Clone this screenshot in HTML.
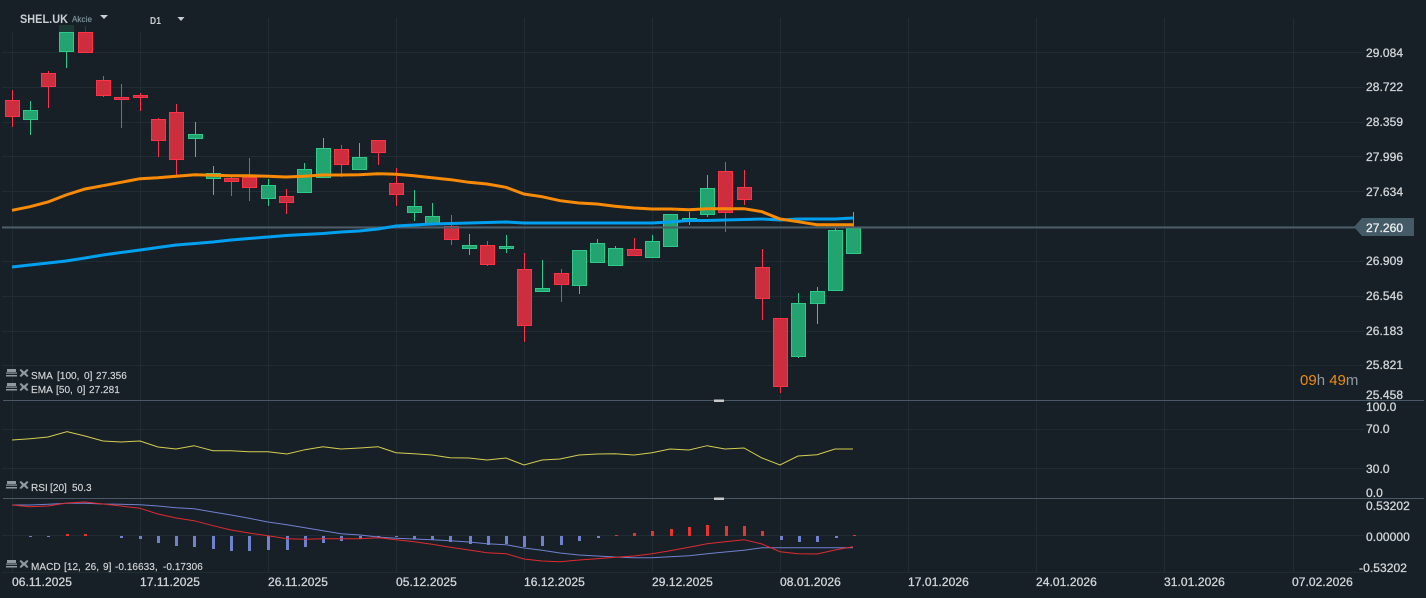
<!DOCTYPE html>
<html><head><meta charset="utf-8"><title>SHEL.UK</title>
<style>
html,body{margin:0;padding:0;background:#172027;width:1426px;height:598px;overflow:hidden}
svg{display:block;position:absolute;left:0;top:0}
text{font-family:"Liberation Sans",sans-serif;font-size:12px;fill:#d3d6d8;stroke:#d3d6d8;stroke-width:.3px;letter-spacing:.08px;white-space:pre}
.l{font-size:10px;fill:#d3d6d8;stroke:#d3d6d8;stroke-width:.15px;letter-spacing:.05px}
.g{fill:none;stroke:#1f2c34;stroke-width:1}
.r rect{fill:#cd2e3e;stroke:#ff3348;stroke-width:1}
.r path{fill:none;stroke:#ff3348;stroke-width:1}
.v rect{fill:#23a36f;stroke:#2ccb89;stroke-width:1}
.v path{fill:none;stroke:#2ccb89;stroke-width:1}
</style></head><body>
<svg width="1426" height="598" viewBox="0 0 1426 598">
<path class="g" d="M2 52.5H1364M2 87.5H1364M2 122.5H1364M2 156.5H1364M2 191.5H1364M2 226.5H1364M2 261.5H1364M2 296.5H1364M2 331.5H1364M2 365.5H1364M2 429.5H1364M2 468.5H1364M2 535.5H1364M2 572.5H1364"/>
<path class="g" d="M12.5 32V572M140.5 32V572M268.5 18V572M396.5 18V572M524.5 18V572M652.5 18V572M780.5 18V572M908.5 18V572M1036.5 18V572M1164.5 18V572M1293.5 18V572"/>

<rect x="59" y="25" width="15" height="7" fill="#1c3a34"/>
<path d="M85.5 26V32" stroke="#5a2a33"/>
<g class="r">
<path d="M12.5 90V127M48.5 71V108M103.5 76V97M121.5 84V128M140.5 93V111M158.5 118V157M176.5 104V176M231.5 177V196M249.5 158V201M286.5 189V214M341.5 145V177M378.5 153V165M396.5 168V206M451.5 215V245M487.5 241V266M524.5 253V342M561.5 269V302M634.5 238V256M725.5 162V232M744.5 170V205M762.5 249V320M780.5 318V393"/>
<rect x="5.5" y="100.5" width="14" height="16"/>
<rect x="41.500" y="73.500" width="14" height="13"/>
<rect x="78.500" y="32.500" width="14" height="20"/>
<rect x="96.500" y="80.500" width="14" height="15"/>
<rect x="114.500" y="97.500" width="14" height="2"/>
<rect x="133.500" y="95.500" width="14" height="2"/>
<rect x="151.500" y="119.500" width="14" height="21"/>
<rect x="169.500" y="112.500" width="14" height="47"/>
<rect x="224.500" y="178.500" width="14" height="3"/>
<rect x="242.500" y="177.500" width="14" height="10"/>
<rect x="279.500" y="196.500" width="14" height="6"/>
<rect x="334.500" y="149.500" width="14" height="15"/>
<rect x="371.500" y="140.500" width="14" height="12"/>
<rect x="389.500" y="183.500" width="14" height="11"/>
<rect x="444.500" y="226.500" width="14" height="13"/>
<rect x="480.500" y="245.500" width="14" height="19"/>
<rect x="517.500" y="269.500" width="14" height="56"/>
<rect x="554.500" y="273.500" width="14" height="11"/>
<rect x="627.500" y="249.500" width="14" height="6"/>
<rect x="718.500" y="171.500" width="14" height="41"/>
<rect x="737.500" y="187.500" width="14" height="12"/>
<rect x="755.500" y="267.500" width="14" height="31"/>
<rect x="773.500" y="318.500" width="14" height="68"/>
</g>
<g class="v">
<path d="M30.5 101V135M66.5 52V68M195.5 122V157M213.5 166V195M268.5 179V206M304.5 163V193M323.5 138V178M359.5 143V170M414.5 190V221M432.5 203V225M469.5 234V255M506.5 235V253M542.5 260V292M579.5 286V294M597.5 239V263M615.5 246V266M652.5 235V258M689.5 212V225M707.5 175V217M798.5 293V358M817.5 287V324M835.5 228V291M853.5 212V254"/>
<rect x="23.500" y="110.500" width="14" height="9"/>
<rect x="59.500" y="32.500" width="14" height="19"/>
<rect x="188.500" y="134.500" width="14" height="4"/>
<rect x="206.500" y="173.500" width="14" height="5"/>
<rect x="261.500" y="185.500" width="14" height="13"/>
<rect x="297.500" y="169.500" width="14" height="23"/>
<rect x="316.500" y="148.500" width="14" height="29"/>
<rect x="352.500" y="157.500" width="14" height="12"/>
<rect x="407.500" y="206.500" width="14" height="6"/>
<rect x="425.500" y="216.500" width="14" height="8"/>
<rect x="462.500" y="245.500" width="14" height="3"/>
<rect x="499.500" y="246.500" width="14" height="2"/>
<rect x="535.500" y="288.500" width="14" height="3"/>
<rect x="572.500" y="250.500" width="14" height="35"/>
<rect x="590.500" y="243.500" width="14" height="19"/>
<rect x="608.500" y="248.500" width="14" height="17"/>
<rect x="645.500" y="241.500" width="14" height="16"/>
<rect x="663.500" y="214.500" width="14" height="32"/>
<rect x="682.500" y="218.500" width="14" height="3"/>
<rect x="700.500" y="188.500" width="14" height="26"/>
<rect x="791.500" y="303.500" width="14" height="53"/>
<rect x="810.500" y="291.500" width="14" height="12"/>
<rect x="828.500" y="230.500" width="14" height="60"/>
<rect x="846.500" y="228.500" width="14" height="25"/>
</g>

<rect x="2" y="226.500" width="1353" height="2" fill="#4b5d69"/>
<polygon points="1354,227 1362,218 1414,218 1414,236 1362,236" fill="#455a67"/>

<polyline fill="none" stroke="#00a0f0" stroke-width="3" points="12,267 30,265 48,263 66,261 85,258 103,255 121,252.500 140,250 158,247.500 176,245 195,243.500 213,242 231,240 249,238.500 268,237 286,235.500 304,234.500 323,233.500 341,232 359,231 378,229 396,226 414,225 432,224 451,223.500 469,223 487,222.500 506,222 524,223 652,223 670,222 689,220.500 707,220.500 725,220 744,219.500 762,219 780,220 798,219 835,219 853,218"/>
<polyline fill="none" stroke="#f98a05" stroke-width="3" points="12,210.300 30,206.700 48,202 66,195 85,189 103,185.700 121,182.300 140,178.700 158,177.700 176,176.300 195,174.700 213,175.300 231,175.700 249,175.700 268,176.300 286,177 304,176.300 323,175 341,175 359,174.700 378,173.700 396,174.300 414,175.700 432,177.700 451,179.700 469,182.300 487,184 506,187.300 524,194 542,196.700 560,200.700 579,203 597,204 615,206.300 634,208 652,209 670,209 689,209.700 707,208.700 725,208.700 744,208.700 762,211.700 780,219 798,221.700 817,224.700 853,224.700"/>

<rect x="3" y="400" width="1421" height="1" fill="#4a5965"/>
<rect x="3" y="498" width="1421" height="1" fill="#4a5965"/>
<rect x="714" y="399.500" width="10" height="2.500" fill="#c9c9c9"/>
<rect x="714" y="497.500" width="10" height="2.500" fill="#c9c9c9"/>

<polyline fill="none" stroke="#d6cd50" stroke-width="1" points="12,440 30,438.700 48,437 67,431.700 85,436 103,441 121,442 140,441 158,447 176,449 194,445.700 213,450.700 231,450.700 249,451.700 268,451.700 287,454 305,449.700 323,446.700 341,449 360,448 378,446.700 396,452.700 414,453.700 432,455 450,457.700 469,458 487,460 506,458 524,465 542,460 560,459 579,455 597,454 615,453.700 634,455 652,452.700 670,449 689,450 707,445.700 725,449 744,448 762,458 780,465 798,456 817,454.700 835,449 853,449"/>

<path fill="#7081ce" d="M29 536h3v1h-3zM47 536h3v1h-3zM120 536h3v2h-3zM139 536h3v3h-3zM157 536h3v7h-3zM175 536h3v10h-3zM193 536h3v11h-3zM212 536h3v13h-3zM230 536h3v15h-3zM248 536h3v15h-3zM267 536h3v14h-3zM286 536h3v14h-3zM304 536h3v11h-3zM322 536h3v7h-3zM340 536h3v5h-3zM359 536h3v3h-3zM377 536h3v1h-3zM395 536h3v1h-3zM413 536h3v3h-3zM431 536h3v4h-3zM449 536h3v6h-3zM469 536h3v8h-3zM487 536h3v9h-3zM505 536h3v8h-3zM523 536h3v11h-3zM541 536h3v10h-3zM560 536h3v9h-3zM578 536h3v5h-3zM597 536h3v2h-3zM780 536h3v4h-3zM798 536h3v6h-3zM816 536h3v6h-3zM835 536h3v2h-3z"/>
<path fill="#e8332f" d="M66 534h3v2h-3zM84 534h3v2h-3zM615 535h3v1h-3zM633 533h3v3h-3zM651 531h3v5h-3zM670 529h3v7h-3zM688 527h3v9h-3zM706 525h3v11h-3zM725 526h3v10h-3zM743 526h3v10h-3zM761 531h3v5h-3zM853 535h3v1h-3z"/>
<polyline fill="none" stroke="#7081ce" stroke-width="1" points="12,505 30,505 48,504.300 67,503.300 85,503.300 103,504 121,504.300 140,504.700 158,506 176,507.700 194,508.700 213,512 231,515 249,518.300 268,522 287,524.700 305,527.700 323,530.700 341,533.700 360,535 378,537 396,538.300 414,539 432,539.700 450,540.700 469,542 487,543.700 506,544.700 524,548 542,550.300 560,553 579,555 597,556 615,557 634,557.700 652,557.700 670,556.700 689,555.700 707,553.700 725,552 744,550.300 762,547.700 853,547.700"/>
<polyline fill="none" stroke="#e02a2e" stroke-width="1" points="12,505 30,506.700 48,506 67,503 85,502 103,504 121,506 140,508.300 158,514 176,518 194,520.700 213,525.700 231,530 249,533 268,535.700 287,538.700 305,539.300 323,538.700 360,538.700 378,537.700 396,539.700 414,541.700 432,544.300 450,547.300 469,550 487,552.700 506,553.700 524,559 542,561 560,561.700 579,560 597,558.700 615,557.300 634,556 652,553.700 670,550.700 689,547.300 707,543.700 725,541.700 744,539.700 762,544 780,551.700 798,553.700 817,554 835,550 853,546.700"/>

<!-- legend icons -->
<g fill="#8f999e"><rect x="7" y="369" width="9" height="3"/><rect x="6" y="372.500" width="11" height="1.200"/><rect x="6" y="375" width="11" height="1.500"/><path d="M19.500 370l1.500-1 3 2.600 3-2.600 1.500 1-2.500 3 2.500 3-1.500 1-3-2.600-3 2.600-1.500-1 2.500-3z"/></g>
<g fill="#8f999e" transform="translate(0,14)"><rect x="7" y="369" width="9" height="3"/><rect x="6" y="372.500" width="11" height="1.200"/><rect x="6" y="375" width="11" height="1.500"/><path d="M19.500 370l1.500-1 3 2.600 3-2.600 1.500 1-2.500 3 2.500 3-1.500 1-3-2.600-3 2.600-1.500-1 2.500-3z"/></g>
<g fill="#8f999e" transform="translate(0,112)"><rect x="7" y="369" width="9" height="3"/><rect x="6" y="372.500" width="11" height="1.200"/><rect x="6" y="375" width="11" height="1.500"/><path d="M19.500 370l1.500-1 3 2.600 3-2.600 1.500 1-2.500 3 2.500 3-1.500 1-3-2.600-3 2.600-1.500-1 2.500-3z"/></g>
<g fill="#8f999e" transform="translate(0,191)"><rect x="7" y="369" width="9" height="3"/><rect x="6" y="372.500" width="11" height="1.200"/><rect x="6" y="375" width="11" height="1.500"/><path d="M19.500 370l1.500-1 3 2.600 3-2.600 1.500 1-2.500 3 2.500 3-1.500 1-3-2.600-3 2.600-1.500-1 2.500-3z"/></g>

<text class="l" y="379"><tspan x="31">SMA</tspan> <tspan x="57">[100,</tspan> <tspan x="84">0]</tspan> <tspan x="96">27.356</tspan></text>
<text class="l" y="393"><tspan x="31">EMA</tspan> <tspan x="56">[50,</tspan> <tspan x="77">0]</tspan> <tspan x="89">27.281</tspan></text>
<text class="l" y="491"><tspan x="31">RSI</tspan> <tspan x="50">[20]</tspan> <tspan x="72">50.3</tspan></text>
<text class="l" y="570"><tspan x="31">MACD</tspan> <tspan x="64">[12,</tspan> <tspan x="85">26,</tspan> <tspan x="103">9]</tspan> <tspan x="115">-0.16633,</tspan> <tspan x="163">-0.17306</tspan></text>

<!-- header -->
<text x="20" y="23" textLength="48" lengthAdjust="spacingAndGlyphs" style="font-size:12px;font-weight:bold;fill:#c9cfd2;stroke:none">SHEL.UK</text>
<text x="72" y="22" textLength="20" lengthAdjust="spacingAndGlyphs" style="font-size:8.500px;fill:#82979f;stroke:#82979f;stroke-width:.15px">Akcie</text>
<polygon points="100,15 108,15 104,19" fill="#c9cfd2"/>
<text x="150" y="24" textLength="11" lengthAdjust="spacingAndGlyphs" style="font-size:10px;font-weight:bold;fill:#c9cfd2;stroke:none">D1</text>
<polygon points="177.500,17 184.500,17 181,21" fill="#c9cfd2"/>

<!-- price axis -->
<text x="1366" y="57">29.084</text>
<text x="1366" y="91">28.722</text>
<text x="1366" y="126">28.359</text>
<text x="1366" y="161">27.996</text>
<text x="1366" y="196">27.634</text>
<text x="1366" y="232" style="fill:#eef0f1;stroke:#eef0f1">27.260</text>
<text x="1366" y="265">26.909</text>
<text x="1366" y="300">26.546</text>
<text x="1366" y="335">26.183</text>
<text x="1366" y="369">25.821</text>
<text x="1366" y="399">25.458</text>
<text x="1366" y="411">100.0</text>
<text x="1366" y="433">70.0</text>
<text x="1366" y="473">30.0</text>
<text x="1366" y="497">0.0</text>
<text x="1366" y="510">0.53202</text>
<text x="1366" y="541">0.00000</text>
<text x="1359" y="572">-0.53202</text>

<text x="1300" y="385" style="font-size:15px;stroke:none;fill:#8f9a9f;letter-spacing:0"><tspan fill="#ee8a12">09</tspan>h <tspan fill="#ee8a12">49</tspan>m</text>

<!-- time axis -->
<text x="12" y="586">06.11.2025</text>
<text x="140" y="586">17.11.2025</text>
<text x="268" y="586">26.11.2025</text>
<text x="396" y="586">05.12.2025</text>
<text x="524" y="586">16.12.2025</text>
<text x="652" y="586">29.12.2025</text>
<text x="780" y="586">08.01.2026</text>
<text x="908" y="586">17.01.2026</text>
<text x="1036" y="586">24.01.2026</text>
<text x="1164" y="586">31.01.2026</text>
<text x="1292" y="586">07.02.2026</text>
</svg>
</body></html>
